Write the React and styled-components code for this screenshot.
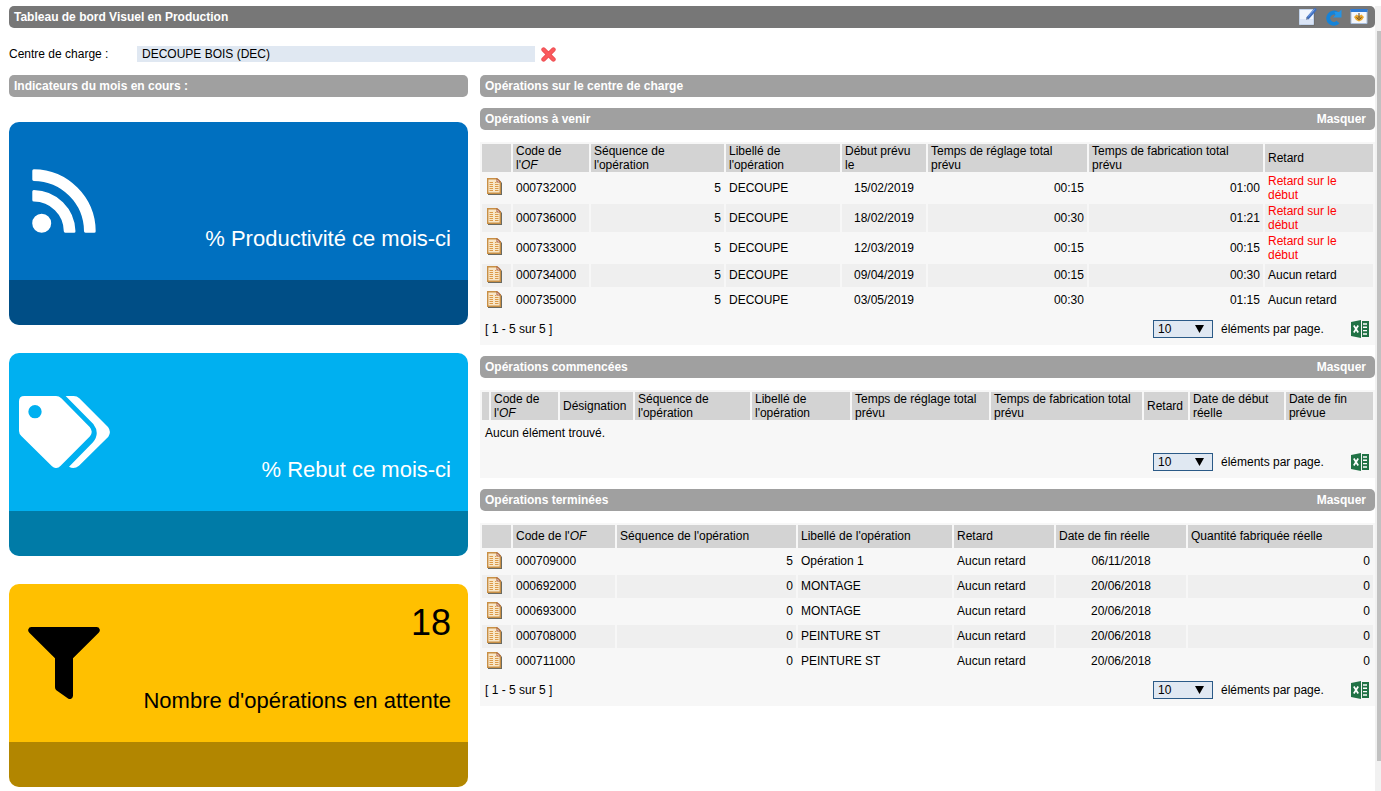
import React, { useState } from "react";
import styled, { createGlobalStyle } from "styled-components";

const GlobalStyle = createGlobalStyle`
  * {
    box-sizing: border-box;
  }
  body {
    margin: 0;
    background: #fff;
    color: #000;
    font-family: "Liberation Sans", Arial, sans-serif;
    font-size: 12px;
    line-height: 14px;
  }
  button, input, select {
    font: inherit;
    color: inherit;
  }
`;

const Page = styled.div`
  display: flex;
  min-height: 100vh;
  padding-top: 6px;
`;

const Main = styled.main`
  flex: 1;
  min-width: 0;
  padding-left: 9px;
`;

const ScrollRail = styled.div`
  width: 6px;
  padding: 25px 0 30px 2px;
  background: #f1f1f1;
`;

const ScrollThumb = styled.div`
  height: 100%;
  background: #c1c1c1;
`;

const Bar = styled.div`
  display: flex;
  align-items: center;
  justify-content: space-between;
  height: 22px;
  padding: 0 9px 0 5px;
  border-radius: 5px;
  background: ${(props) => (props.$dark ? "#777" : "#a0a0a0")};
  color: #fff;
  h1,
  h2,
  h3 {
    margin: 0;
    font-size: 12px;
    font-weight: bold;
  }
`;

const Tools = styled.div`
  display: flex;
  gap: 8px;
  margin-right: -2px;
`;

const PlainButton = styled.button`
  display: flex;
  padding: 0;
  border: 0;
  background: none;
  font-weight: ${(props) => (props.$bold ? "bold" : "normal")};
  cursor: pointer;
`;

const Filter = styled.div`
  display: flex;
  align-items: center;
  padding: 18px 0 13px;
  label {
    width: 128px;
  }
  input {
    width: 398px;
    height: 16px;
    margin-right: 6px;
    padding: 0 5px;
    border: 0;
    background: #e0e8f2;
  }
`;

const Columns = styled.div`
  display: grid;
  grid-template-columns: 459fr 895fr;
  gap: 12px;
`;

const Cards = styled.div`
  display: flex;
  flex-direction: column;
  gap: 28px;
  padding: 25px 0 4px;
`;

const CardBox = styled.section`
  overflow: hidden;
  border-radius: 10px;
  background: ${(props) => props.$color};
  color: ${(props) => props.$text};
`;

const CardBody = styled.div`
  display: flex;
  height: 158px;
`;

const CardIcon = styled.div`
  display: flex;
  flex: none;
  align-items: center;
  justify-content: center;
  width: 110px;
`;

const CardText = styled.div`
  display: flex;
  flex: 1;
  flex-direction: column;
  align-items: flex-end;
  padding: 16px 17px 28px 0;
`;

const CardValue = styled.div`
  font-size: 36px;
  line-height: 46px;
`;

const CardLabel = styled.div`
  margin-top: auto;
  font-size: 22px;
  line-height: 26px;
  white-space: nowrap;
`;

const CardFoot = styled.div`
  height: 45px;
  background: rgba(0, 0, 0, 0.3);
`;

const Operations = styled.div`
  display: flex;
  flex-direction: column;
  gap: 11px;
`;

const ListBox = styled.div`
  margin-top: 12px;
  background: #f7f7f7;
`;

const Table = styled.table`
  width: 100%;
  table-layout: fixed;
  border-collapse: separate;
  border-spacing: 2px;
  tbody tr:nth-child(even) td {
    background: #efefef;
  }
`;

const HeadCell = styled.th`
  height: ${(props) => (props.$tall ? 28 : 23)}px;
  padding: ${(props) => (props.$tall ? "0 3px" : "0 3px 1px")};
  background: #d3d3d3;
  font-weight: normal;
  text-align: left;
`;

const Cell = styled.td`
  height: 23px;
  padding: ${(props) => (props.$late ? "0 3px" : "0 3px 1px")};
  text-align: ${(props) => props.$align || "left"};
  color: ${(props) => (props.$late ? "#f00" : "inherit")};
`;

const IconCell = styled(Cell)`
  padding: 0 5px 3px;
`;

const Pager = styled.div`
  display: flex;
  align-items: center;
  height: 31px;
  padding: 0 6px 2px 5px;
  label {
    min-width: 106px;
    margin: 0 24px 0 8px;
  }
`;

const SelectWrap = styled.span`
  display: grid;
  align-items: center;
  margin-left: auto;
  select,
  svg {
    grid-area: 1 / 1;
  }
  svg {
    justify-self: end;
    margin-right: 9px;
    pointer-events: none;
  }
`;

const Select = styled.select`
  width: 60px;
  height: 18px;
  padding: 0 4px;
  border: 1px solid #2b5a87;
  border-radius: 0;
  background: #e0e8f2;
  appearance: none;
`;

const RssIcon = () => (
  <svg width="64" height="64" viewBox="0 0 64 64" fill="#fff" stroke="#fff" strokeWidth="3" strokeLinejoin="round">
    <circle cx="9.7" cy="54.3" r="8" />
    <path d="M1.8 22.4A41 41 0 0 1 42 62.2H33.3A31.5 31.5 0 0 0 1.8 31Z" />
    <path d="M1.8 1.8A61 61 0 0 1 62.2 62.2H53.5A52 52 0 0 0 1.8 10.5Z" />
  </svg>
);

const TagsIcon = () => (
  <svg width="91" height="72" viewBox="57 78 273 216" fill="#fff">
    <path
      fillRule="evenodd"
      d="M73 78H168Q177 78 184 85L269 171Q281 185 270 199L182 287Q169 300 156 289L64 198Q57 191 57 183V94Q57 78 73 78ZM105 105a20 20 0 1 0 0 40a20 20 0 1 0 0 -40Z"
    />
    <path d="M197 78H221Q231 78 238 85L324 171Q335 185 325 200L237 287Q222 299 207 290L279 217Q301 190 280 162Z" />
  </svg>
);

const FunnelIcon = () => (
  <svg width="72" height="72" viewBox="85 111 216 216">
    <path d="M95 111H291Q298 111 300 118Q302 123 297 128L220 205V318Q219 325 213 327Q208 328 203 324L170 301Q166 298 166 292V205L89 128Q84 123 86 118Q88 111 95 111Z" />
  </svg>
);

const EditIcon = () => (
  <svg width="18" height="18" viewBox="0 0 18 18">
    <path d="M2 2.5H15.5V17.5H2Z" fill="#555" opacity=".5" />
    <path d="M.5 1.5H14.5V16.5H.5Z" fill="#f1f6fd" stroke="#c3d4ec" />
    <path d="M1 11H14V16H1Z" fill="#dbe5f6" />
    <path d="M16 1.7L9 9.8" stroke="#3f6fc0" strokeWidth="3" strokeLinecap="round" />
    <path d="M15.5 1.4L9.2 8.6" stroke="#7ca6e6" strokeWidth="1" />
    <path d="M7 12L7.8 9L9.6 10.6Z" fill="#6b7b95" />
  </svg>
);

const RefreshIcon = () => (
  <svg width="17" height="18" viewBox="0 0 17 18">
    <path d="M13 14A5.6 5.6 0 1 1 12 5.6" fill="none" stroke="#1583d8" strokeWidth="4" />
    <path d="M16.500 1.500V9.500H8L10.500 7L9.500 4H14Z" fill="#2494e6" />
  </svg>
);

const WindowIcon = () => (
  <svg width="18" height="18" viewBox="0 0 18 18">
    <path d="M1 2H17V15.5H1Z" fill="#f4f7fc" stroke="#a9bfdd" />
    <path d="M.5 1H17.5V4H.5Z" fill="#2f7bd6" />
    <path d="M4 9L6.500 6.500L9 8L11.500 6.500L14 9L12 12L9 13.500L6 12Z" fill="#eaa62c" />
    <path d="M9 5V10M6.500 9.500L9 11.500L11.500 9.500" fill="none" stroke="#5d4423" />
  </svg>
);

const CrossIcon = () => (
  <svg width="15" height="15" viewBox="0 0 15 15" strokeLinecap="round">
    <path d="M2.600 2.600L12.400 12.400M12.400 2.600L2.600 12.400" stroke="#ee5256" strokeWidth="4.600" />
    <path d="M2.600 2.600L12.400 12.400M12.400 2.600L2.600 12.400" stroke="#fb5a5d" strokeWidth="2.600" />
  </svg>
);

const SheetIcon = () => (
  <svg width="15" height="17" viewBox="0 0 15 17">
    <path d="M1 1.500H12L15 5V17H1Z" fill="#6b6a60" />
    <path d="M.7 .7H10L13.300 4V15.300H.7Z" fill="#f8e6c8" stroke="#c88f45" strokeWidth="1.400" />
    <path d="M10 .7L13.300 4H10Z" fill="#fff" stroke="#a8583a" />
    <path
      d="M2.500 4.500H6M2.500 6.500H6M2.500 8.500H6M2.500 10.500H6M2.500 12.500H6M8 4.500H9.500M8 6.500H11.500M8 8.500H11.500M8 10.500H11.500M8 12.500H11.500"
      stroke="#dc9a48"
      strokeWidth="1.200"
    />
  </svg>
);

const ExcelIcon = () => (
  <svg width="18" height="18" viewBox="0 0 18 18">
    <path d="M0 2L10 0V18L0 16Z" fill="#207245" />
    <path d="M11 1H18V17H11Z" fill="#207245" />
    <path d="M2.800 5.500L7.200 12.500M7.200 5.500L2.800 12.500" stroke="#fff" strokeWidth="1.700" />
    <path d="M12 4H16M12 7.300H16M12 10.600H16M12 14H16" stroke="#fff" strokeWidth="1.400" />
  </svg>
);

const code = (
  <>
    Code de l'<i>OF</i>
  </>
);

const upcoming = {
  columns: [
    { width: 29, icon: true },
    { width: 76, title: code },
    { width: 133, title: "Séquence de l'opération", align: "right" },
    { width: 114, title: "Libellé de l'opération" },
    { width: 84, title: "Début prévu le", align: "center" },
    { width: 159, title: "Temps de réglage total prévu", align: "right" },
    { width: 174, title: "Temps de fabrication total prévu", align: "right" },
    { width: 108, title: "Retard" },
  ],
  rows: [
    ["000732000", "5", "DECOUPE", "15/02/2019", "00:15", "01:00", "Retard sur le début"],
    ["000736000", "5", "DECOUPE", "18/02/2019", "00:30", "01:21", "Retard sur le début"],
    ["000733000", "5", "DECOUPE", "12/03/2019", "00:15", "00:15", "Retard sur le début"],
    ["000734000", "5", "DECOUPE", "09/04/2019", "00:15", "00:30", "Aucun retard"],
    ["000735000", "5", "DECOUPE", "03/05/2019", "00:30", "01:15", "Aucun retard"],
  ],
};

const started = {
  columns: [
    { width: 7, icon: true },
    { width: 67, title: code },
    { width: 73, title: "Désignation" },
    { width: 115, title: "Séquence de l'opération" },
    { width: 98, title: "Libellé de l'opération" },
    { width: 137, title: "Temps de réglage total prévu" },
    { width: 151, title: "Temps de fabrication total prévu" },
    { width: 44, title: "Retard" },
    { width: 94, title: "Date de début réelle" },
    { width: 87, title: "Date de fin prévue" },
  ],
  rows: [],
};

const finished = {
  columns: [
    { width: 29, icon: true },
    { width: 102, title: code },
    { width: 179, title: "Séquence de l'opération", align: "right" },
    { width: 154, title: "Libellé de l'opération" },
    { width: 100, title: "Retard" },
    { width: 130, title: "Date de fin réelle", align: "center" },
    { width: 185, title: "Quantité fabriquée réelle", align: "right" },
  ],
  rows: [
    ["000709000", "5", "Opération 1", "Aucun retard", "06/11/2018", "0"],
    ["000692000", "0", "MONTAGE", "Aucun retard", "20/06/2018", "0"],
    ["000693000", "0", "MONTAGE", "Aucun retard", "20/06/2018", "0"],
    ["000708000", "0", "PEINTURE ST", "Aucun retard", "20/06/2018", "0"],
    ["000711000", "0", "PEINTURE ST", "Aucun retard", "20/06/2018", "0"],
  ],
};

function Card({ color, text, icon, value, label }) {
  return (
    <CardBox $color={color} $text={text}>
      <CardBody>
        <CardIcon>{icon}</CardIcon>
        <CardText>
          {value && <CardValue>{value}</CardValue>}
          <CardLabel>{label}</CardLabel>
        </CardText>
      </CardBody>
      <CardFoot />
    </CardBox>
  );
}

function OperationList({ id, title, data, tall }) {
  const [open, setOpen] = useState(true);
  const { columns, rows } = data;
  const total = columns.reduce((sum, column) => sum + column.width, 0);

  return (
    <section>
      <Bar>
        <h3>{title}</h3>
        <PlainButton $bold onClick={() => setOpen(!open)}>
          {open ? "Masquer" : "Afficher"}
        </PlainButton>
      </Bar>
      {open && (
        <ListBox>
          <Table>
            <colgroup>
              {columns.map((column, i) => (
                <col key={i} style={{ width: `${(column.width / total) * 100}%` }} />
              ))}
            </colgroup>
            <thead>
              <tr>
                {columns.map((column, i) => (
                  <HeadCell key={i} $tall={tall}>
                    {column.title}
                  </HeadCell>
                ))}
              </tr>
            </thead>
            <tbody>
              {rows.map((row) => (
                <tr key={row[0]}>
                  <IconCell>
                    <PlainButton aria-label={row[0]}>
                      <SheetIcon />
                    </PlainButton>
                  </IconCell>
                  {row.map((value, i) => (
                    <Cell key={i} $align={columns[i + 1].align} $late={value.startsWith("Retard")}>
                      {value}
                    </Cell>
                  ))}
                </tr>
              ))}
              {rows.length === 0 && (
                <tr>
                  <Cell colSpan={columns.length}>Aucun élément trouvé.</Cell>
                </tr>
              )}
            </tbody>
          </Table>
          <Pager>
            {rows.length > 0 && <span>{`[ 1 - ${rows.length} sur ${rows.length} ]`}</span>}
            <SelectWrap>
              <Select id={id} defaultValue="10">
                <option>10</option>
                <option>20</option>
                <option>50</option>
              </Select>
              <svg width="9" height="8" viewBox="0 0 9 8">
                <path d="M0 0H9L4.500 8Z" />
              </svg>
            </SelectWrap>
            <label htmlFor={id}>éléments par page.</label>
            <PlainButton aria-label="Excel">
              <ExcelIcon />
            </PlainButton>
          </Pager>
        </ListBox>
      )}
    </section>
  );
}

export default function App() {
  const [center, setCenter] = useState("DECOUPE BOIS (DEC)");

  return (
    <Page>
      <GlobalStyle />
      <Main>
        <Bar $dark>
          <h1>Tableau de bord Visuel en Production</h1>
          <Tools>
            <PlainButton aria-label="Modifier">
              <EditIcon />
            </PlainButton>
            <PlainButton aria-label="Actualiser">
              <RefreshIcon />
            </PlainButton>
            <PlainButton aria-label="Exporter">
              <WindowIcon />
            </PlainButton>
          </Tools>
        </Bar>
        <Filter>
          <label htmlFor="center">Centre de charge :</label>
          <input id="center" value={center} onChange={(e) => setCenter(e.target.value)} />
          <PlainButton aria-label="Effacer" onClick={() => setCenter("")}>
            <CrossIcon />
          </PlainButton>
        </Filter>
        <Columns>
          <div>
            <Bar>
              <h2>Indicateurs du mois en cours :</h2>
            </Bar>
            <Cards>
              <Card color="#0070c0" text="#fff" icon={<RssIcon />} label="% Productivité ce mois-ci" />
              <Card color="#00b0f0" text="#fff" icon={<TagsIcon />} label="% Rebut ce mois-ci" />
              <Card
                color="#ffc000"
                text="#000"
                icon={<FunnelIcon />}
                value="18"
                label="Nombre d'opérations en attente"
              />
            </Cards>
          </div>
          <Operations>
            <Bar>
              <h2>Opérations sur le centre de charge</h2>
            </Bar>
            <OperationList id="upcoming" title="Opérations à venir" data={upcoming} tall />
            <OperationList id="started" title="Opérations commencées" data={started} tall />
            <OperationList id="finished" title="Opérations terminées" data={finished} />
          </Operations>
        </Columns>
      </Main>
      <ScrollRail>
        <ScrollThumb />
      </ScrollRail>
    </Page>
  );
}
